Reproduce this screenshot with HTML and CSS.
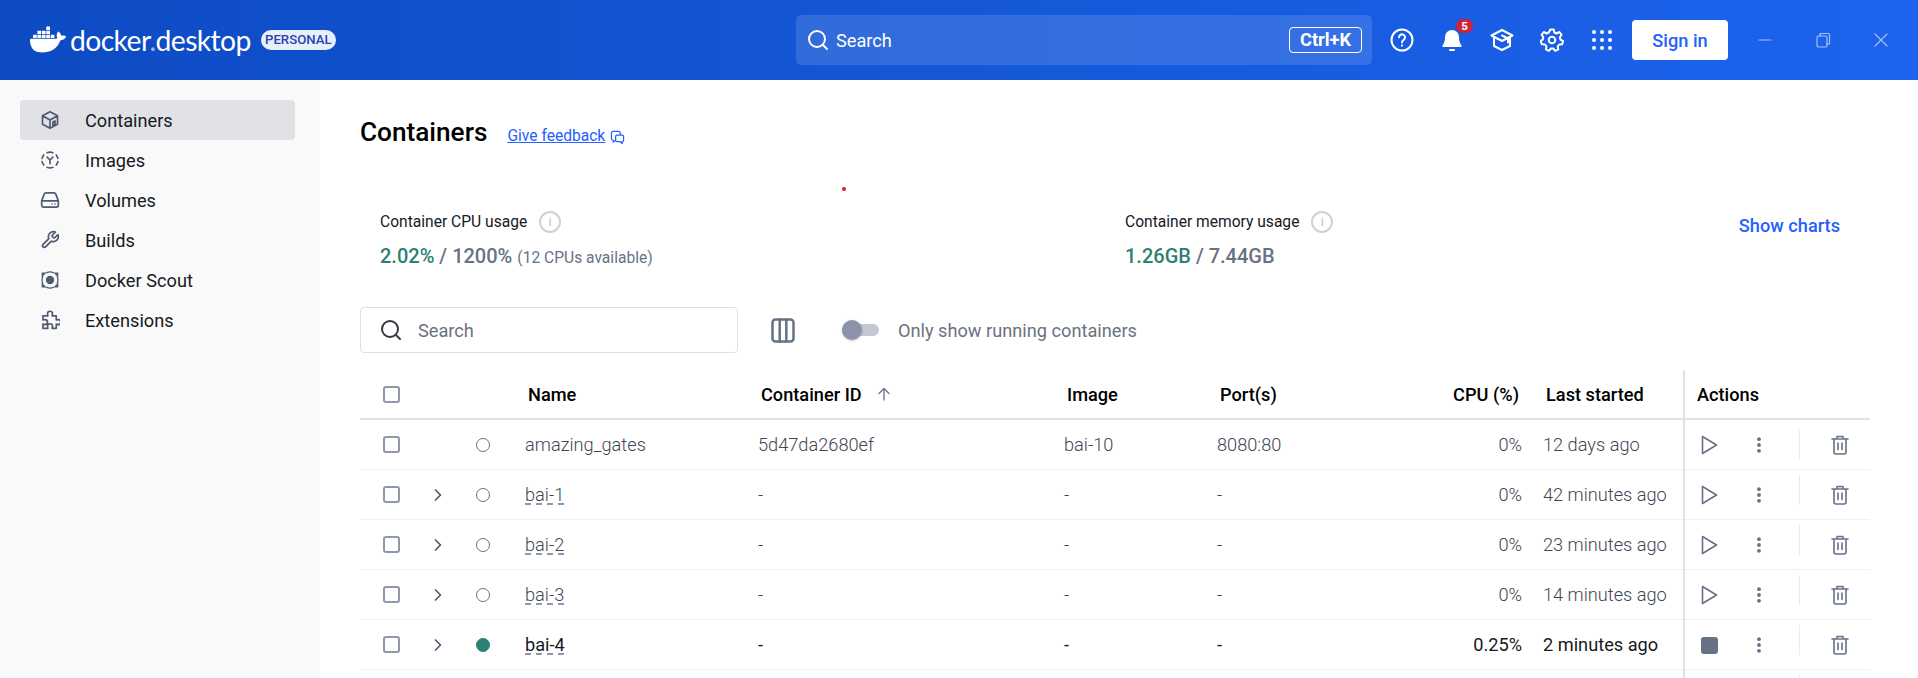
FILE: index.html
```html
<!DOCTYPE html>
<html lang="en">
<head>
    <meta charset="UTF-8">
    <title>Docker Desktop</title>
    <link rel="stylesheet" href="styles.css">
</head>
<body>
    <svg class="sprites" xmlns="http://www.w3.org/2000/svg">
        <symbol id="i-search" viewBox="0 0 24 24"><circle cx="11" cy="11" r="8"/><path d="M17 17l4 4"/></symbol>
        <symbol id="i-play" viewBox="0 0 24 24"><path d="M5.5 3.5l14 8.500-14 8.500z"/></symbol>
        <symbol id="i-more" viewBox="0 0 24 24"><circle class="solid" cx="12" cy="6.200" r="1.900"/><circle class="solid" cx="12" cy="12" r="1.900"/><circle class="solid" cx="12" cy="17.800" r="1.900"/></symbol>
        <symbol id="i-trash" viewBox="0 0 24 24"><path d="M4 6h16M9 6V3.500h6V6M6 6v13a2 2 0 002 2h8a2 2 0 002-2V6M10 10v6.500M14 10v6.500"/></symbol>
        <symbol id="i-chevron" viewBox="0 0 24 24"><path d="M9 6l6 6-6 6"/></symbol>
    </svg>

    <header class="topbar">
        <div class="brand">
            <svg class="whale" viewBox="0 0 24 19"><path transform="translate(0 -3)" d="M13.983 11.078h2.119a.186.186 0 00.186-.185V9.006a.186.186 0 00-.186-.186h-2.119a.185.185 0 00-.185.185v1.888c0 .102.083.185.185.185m-2.954-5.43h2.118a.186.186 0 00.186-.186V3.574a.186.186 0 00-.186-.185h-2.118a.185.185 0 00-.185.185v1.888c0 .102.082.185.185.186m0 2.716h2.118a.187.187 0 00.186-.186V6.29a.186.186 0 00-.186-.185h-2.118a.185.185 0 00-.185.185v1.887c0 .102.082.185.185.186m-2.93 0h2.12a.186.186 0 00.184-.186V6.29a.185.185 0 00-.185-.185H8.1a.185.185 0 00-.185.185v1.887c0 .102.083.185.185.186m-2.964 0h2.119a.186.186 0 00.185-.186V6.29a.185.185 0 00-.185-.185H5.136a.186.186 0 00-.186.185v1.887c0 .102.084.185.186.186m5.893 2.715h2.118a.186.186 0 00.186-.185V9.006a.186.186 0 00-.186-.186h-2.118a.185.185 0 00-.185.185v1.888c0 .102.082.185.185.185m-2.93 0h2.12a.185.185 0 00.184-.185V9.006a.185.185 0 00-.184-.186h-2.12a.185.185 0 00-.184.185v1.888c0 .102.083.185.185.185m-2.964 0h2.119a.185.185 0 00.185-.185V9.006a.185.185 0 00-.184-.186h-2.12a.186.186 0 00-.186.186v1.887c0 .102.084.185.186.185m-2.92 0h2.12a.185.185 0 00.184-.185V9.006a.185.185 0 00-.184-.186h-2.12a.185.185 0 00-.185.185v1.888c0 .102.083.185.185.185M23.763 9.89c-.065-.051-.672-.51-1.954-.51-.338.001-.676.03-1.01.087-.248-1.7-1.653-2.53-1.716-2.566l-.344-.199-.226.327c-.284.438-.49.922-.612 1.43-.23.97-.09 1.882.403 2.661-.595.332-1.55.413-1.744.42H.751a.751.751 0 00-.75.748 11.376 11.376 0 00.692 4.062c.545 1.428 1.355 2.48 2.41 3.124 1.18.723 3.1 1.137 5.275 1.137.983.003 1.963-.086 2.93-.266a12.248 12.248 0 003.823-1.389c.98-.567 1.86-1.288 2.61-2.136 1.252-1.418 1.998-2.997 2.553-4.4h.221c1.372 0 2.215-.549 2.68-1.009.309-.293.55-.65.707-1.046l.098-.288Z"/></svg>
            <span class="wordmark">docker<span class="wordmark-dot">.</span>desktop</span>
            <span class="plan">PERSONAL</span>
        </div>

        <div class="global-search">
            <svg class="icon"><use href="#i-search"/></svg>
            <span class="global-search-text">Search</span>
            <kbd class="shortcut">Ctrl+K</kbd>
        </div>

        <div class="top-icons">
            <span class="top-icon">
                <svg viewBox="0 0 24 24"><circle cx="12" cy="12" r="10.500"/><path d="M9 9.300a3 3 0 115 2.300c-1.200.9-2 1.400-2 2.900"/><circle class="solid" cx="12" cy="17.600" r="1.100"/></svg>
            </span>
            <span class="top-icon">
                <svg viewBox="0 0 24 24"><path class="solid" d="M12 2a7 7 0 00-7 7c0 4-.8 6.300-2.500 8.500-.5.700 0 1.500.8 1.500h17.400c.8 0 1.300-.8.800-1.500C19.800 15.300 19 13 19 9a7 7 0 00-7-7z"/><rect class="solid" x="9" y="21" width="6" height="2" rx="1"/></svg>
                <span class="badge">5</span>
            </span>
            <span class="top-icon">
                <svg viewBox="0 0 24 24"><path d="M4 9v9l8 4 8-4V9M1.500 7.500L12 2l10.500 5.500L12 13zM12 7.500l6 3v4"/></svg>
            </span>
            <span class="top-icon">
                <svg viewBox="0 0 24 24"><circle cx="12" cy="12" r="3.300"/><path d="M10.300 1.500h3.400l.7 3 2.200 1 2.800-1.500 2.200 2.800-1.700 2.500.5 2.300 2.600 1.400-.8 3.300-3 .2-1.500 1.900.6 3-3 1.400-2-2.300h-2.400l-2 2.300-3-1.400.6-3-1.500-1.900-3-.2L.2 13l2.600-1.400.5-2.300L1.600 6.800l2.200-2.800 2.800 1.500 2.200-1z"/></svg>
            </span>
            <span class="top-icon">
                <svg viewBox="0 0 24 24"><g class="solid"><circle cx="4" cy="4" r="2"/><circle cx="12" cy="4" r="2"/><circle cx="20" cy="4" r="2"/><circle cx="4" cy="12" r="2"/><circle cx="12" cy="12" r="2"/><circle cx="20" cy="12" r="2"/><circle cx="4" cy="20" r="2"/><circle cx="12" cy="20" r="2"/><circle cx="20" cy="20" r="2"/></g></svg>
            </span>
        </div>

        <button class="sign-in">Sign in</button>

        <div class="window-controls">
            <span class="win-btn"><svg viewBox="0 0 16 16"><path d="M2 8h12"/></svg></span>
            <span class="win-btn"><svg viewBox="0 0 16 16"><rect x="2" y="4" width="10" height="11" rx="1.500"/><path d="M5 4V1.500h8.500a1 1 0 011 1V12H12"/></svg></span>
            <span class="win-btn"><svg viewBox="0 0 16 16"><path d="M2 2l12 12M14 2L2 14"/></svg></span>
        </div>
    </header>

    <div class="app">
        <nav class="sidebar">
            <a class="nav-item active">
                <svg viewBox="0 0 24 24"><path d="M12 2l9 5v10l-9 5-9-5V7zM3 7l9 5 9-5M12 12v10M15.500 14.500v4l2.500-1.400v-4z"/></svg>
                Containers
            </a>
            <a class="nav-item">
                <svg viewBox="0 0 24 24"><path d="M8.500 3.200A9.500 9.500 0 0115.500 3.200M19.500 6a9.500 9.500 0 011.900 4M21.500 14a9.500 9.500 0 01-2 4M15.500 20.800a9.500 9.500 0 01-7 0M4.500 18a9.500 9.500 0 01-2-4M2.600 10a9.500 9.500 0 011.900-4M8.500 8.500L12 12l3.500-3.500M12 12v4.500"/></svg>
                Images
            </a>
            <a class="nav-item">
                <svg viewBox="0 0 24 24"><path d="M2 13l3-8a2.500 2.500 0 012.300-1.500h9.400A2.500 2.500 0 0119 5l3 8v5a2.500 2.500 0 01-2.500 2.500h-15A2.500 2.500 0 012 18zM2 13h20"/><circle class="solid" cx="14.500" cy="16.800" r="1"/><circle class="solid" cx="18" cy="16.800" r="1"/></svg>
                Volumes
            </a>
            <a class="nav-item">
                <svg viewBox="0 0 24 24"><path d="M14.700 6.300a1 1 0 000 1.400l1.600 1.600a1 1 0 001.400 0l3.800-3.800a6 6 0 01-7.900 7.900l-6.900 6.900a2.100 2.100 0 01-3-3l6.900-6.900a6 6 0 017.900-7.900z"/></svg>
                Builds
            </a>
            <a class="nav-item">
                <svg viewBox="0 0 24 24"><circle class="solid" cx="12" cy="12" r="5"/><path class="thin" d="M8 3.200a10 10 0 018 0M20.800 8a10 10 0 010 8M16 20.800a10 10 0 01-8 0M3.200 16a10 10 0 010-8"/><path class="solid" d="M2 3h6l-6 6zM22 3v6l-6-6zM2 21v-6l6 6zM22 21h-6l6-6z"/></svg>
                Docker Scout
            </a>
            <a class="nav-item">
                <svg viewBox="0 0 24 24"><path d="M9 4.500a3 3 0 016 0c0 1-.5 1.500-.5 2.500h5v5c1 0 1.500-.5 2.500-.5a3 3 0 010 6c-1 0-1.500-.5-2.500-.5V22h-5c0-1 .5-1.500.5-2.500a3 3 0 00-6 0c0 1 .5 1.500.5 2.500h-6v-5c1 0 1.500.5 2.500.5a3 3 0 000-6c-1 0-1.500.5-2.500.5V7h6c0-1-.5-1.500-.5-2.500z"/></svg>
                Extensions
            </a>
        </nav>

        <main class="content">
            <div class="page-title">
                <h1>Containers</h1>
                <a class="feedback">Give feedback</a>
                <svg class="feedback-icon" viewBox="0 0 16 16"><path d="M11 5.500V3.500A2 2 0 009 1.500H3.500a2 2 0 00-2 2V9a2 2 0 002 2v2l2-2M7.500 5.500h5.500a1.500 1.500 0 011.500 1.500v4a1.500 1.500 0 01-1.500 1.500v2l-2-2H7.500A1.500 1.500 0 016 11V7a1.500 1.500 0 011.500-1.500z"/></svg>
            </div>

            <div class="stats">
                <div class="stat stat-cpu">
                    <div class="stat-label">Container CPU usage <span class="info">i</span></div>
                    <div class="stat-value"><span class="used">2.02%</span> / 1200% <small>(12 CPUs available)</small></div>
                </div>
                <div class="stat stat-mem">
                    <div class="stat-label">Container memory usage <span class="info">i</span></div>
                    <div class="stat-value"><span class="used">1.26GB</span> / 7.44GB</div>
                </div>
                <a class="show-charts">Show charts</a>
            </div>

            <div class="toolbar">
                <div class="search-box">
                    <svg class="icon"><use href="#i-search"/></svg>
                    <span>Search</span>
                </div>
                <svg class="columns-icon" viewBox="0 0 24 25"><rect x="1.500" y="1.500" width="21" height="22" rx="3"/><path d="M8.700 1.500v22M15.300 1.500v22"/></svg>
                <span class="toggle"><span class="toggle-thumb"></span></span>
                <span class="toggle-label">Only show running containers</span>
            </div>

            <div class="table">
                <div class="row head">
                    <div class="cell c-check"><span class="checkbox"></span></div>
                    <div class="cell c-expand"></div>
                    <div class="cell c-status"></div>
                    <div class="cell c-name">Name</div>
                    <div class="cell c-id">Container ID <svg class="sort" viewBox="0 0 16 16"><path d="M8 14V2.500M3 7.500l5-5 5 5"/></svg></div>
                    <div class="cell c-image">Image</div>
                    <div class="cell c-ports">Port(s)</div>
                    <div class="cell c-cpu">CPU (%)</div>
                    <div class="cell c-started">Last started</div>
                    <div class="cell c-actions">Actions</div>
                </div>

                <div class="row">
                    <div class="cell c-check"><span class="checkbox"></span></div>
                    <div class="cell c-expand"></div>
                    <div class="cell c-status"><span class="dot"></span></div>
                    <div class="cell c-name">amazing_gates</div>
                    <div class="cell c-id">5d47da2680ef</div>
                    <div class="cell c-image">bai-10</div>
                    <div class="cell c-ports">8080:80</div>
                    <div class="cell c-cpu">0%</div>
                    <div class="cell c-started">12 days ago</div>
                    <div class="cell c-actions">
                        <span class="act"><svg class="icon"><use href="#i-play"/></svg></span>
                        <span class="act"><svg class="icon"><use href="#i-more"/></svg></span>
                        <span class="act-divider first"></span>
                        <span class="act"><svg class="icon"><use href="#i-trash"/></svg></span>
                    </div>
                </div>

                <div class="row">
                    <div class="cell c-check"><span class="checkbox"></span></div>
                    <div class="cell c-expand"><svg class="icon"><use href="#i-chevron"/></svg></div>
                    <div class="cell c-status"><span class="dot"></span></div>
                    <div class="cell c-name"><span class="stack-name">bai-1</span></div>
                    <div class="cell c-id">-</div>
                    <div class="cell c-image">-</div>
                    <div class="cell c-ports">-</div>
                    <div class="cell c-cpu">0%</div>
                    <div class="cell c-started">42 minutes ago</div>
                    <div class="cell c-actions">
                        <span class="act"><svg class="icon"><use href="#i-play"/></svg></span>
                        <span class="act"><svg class="icon"><use href="#i-more"/></svg></span>
                        <span class="act-divider"></span>
                        <span class="act"><svg class="icon"><use href="#i-trash"/></svg></span>
                    </div>
                </div>

                <div class="row">
                    <div class="cell c-check"><span class="checkbox"></span></div>
                    <div class="cell c-expand"><svg class="icon"><use href="#i-chevron"/></svg></div>
                    <div class="cell c-status"><span class="dot"></span></div>
                    <div class="cell c-name"><span class="stack-name">bai-2</span></div>
                    <div class="cell c-id">-</div>
                    <div class="cell c-image">-</div>
                    <div class="cell c-ports">-</div>
                    <div class="cell c-cpu">0%</div>
                    <div class="cell c-started">23 minutes ago</div>
                    <div class="cell c-actions">
                        <span class="act"><svg class="icon"><use href="#i-play"/></svg></span>
                        <span class="act"><svg class="icon"><use href="#i-more"/></svg></span>
                        <span class="act-divider"></span>
                        <span class="act"><svg class="icon"><use href="#i-trash"/></svg></span>
                    </div>
                </div>

                <div class="row">
                    <div class="cell c-check"><span class="checkbox"></span></div>
                    <div class="cell c-expand"><svg class="icon"><use href="#i-chevron"/></svg></div>
                    <div class="cell c-status"><span class="dot"></span></div>
                    <div class="cell c-name"><span class="stack-name">bai-3</span></div>
                    <div class="cell c-id">-</div>
                    <div class="cell c-image">-</div>
                    <div class="cell c-ports">-</div>
                    <div class="cell c-cpu">0%</div>
                    <div class="cell c-started">14 minutes ago</div>
                    <div class="cell c-actions">
                        <span class="act"><svg class="icon"><use href="#i-play"/></svg></span>
                        <span class="act"><svg class="icon"><use href="#i-more"/></svg></span>
                        <span class="act-divider"></span>
                        <span class="act"><svg class="icon"><use href="#i-trash"/></svg></span>
                    </div>
                </div>

                <div class="row running">
                    <div class="cell c-check"><span class="checkbox"></span></div>
                    <div class="cell c-expand"><svg class="icon"><use href="#i-chevron"/></svg></div>
                    <div class="cell c-status"><span class="dot"></span></div>
                    <div class="cell c-name"><span class="stack-name">bai-4</span></div>
                    <div class="cell c-id">-</div>
                    <div class="cell c-image">-</div>
                    <div class="cell c-ports">-</div>
                    <div class="cell c-cpu">0.25%</div>
                    <div class="cell c-started">2 minutes ago</div>
                    <div class="cell c-actions">
                        <span class="act"><span class="stop"></span></span>
                        <span class="act"><svg class="icon"><use href="#i-more"/></svg></span>
                        <span class="act-divider"></span>
                        <span class="act"><svg class="icon"><use href="#i-trash"/></svg></span>
                    </div>
                </div>

                <div class="row row-cut">
                    <div class="cell c-actions c-last"><span class="act-divider"></span></div>
                </div>
            </div>
        </main>
    </div>

    <span class="cursor-dot"></span>
</body>
</html>
```

FILE: styles.css
```css
* {
    box-sizing: border-box;
}
html, body {
    height: 100%;
}
body {
    margin: 0;
    overflow: hidden;
    font-family: Roboto, "Liberation Sans", sans-serif;
    font-size: 18.2px;
    color: #17191e;
    background: #fff;
}
svg {
    fill: none;
    stroke: currentColor;
    stroke-width: 2;
    stroke-linecap: round;
    stroke-linejoin: round;
}
.solid {
    fill: currentColor;
    stroke: none;
}
.sprites {
    display: none;
}
.icon {
    width: 24px;
    height: 24px;
    display: block;
}

/* top bar */
.topbar {
    height: 80px;
    display: flex;
    align-items: center;
    color: #fff;
    background: linear-gradient(90deg, #0d4bc3 0%, #1d63ed 100%);
}
.brand {
    width: 796px;
    padding-left: 30px;
    display: flex;
    align-items: center;
}
.whale {
    width: 36px;
    height: 28.5px;
    fill: #fff;
    stroke: none;
    flex: none;
}
.wordmark {
    margin-left: 4px;
    font-family: Lato, sans-serif;
    font-size: 28.3px;
    letter-spacing: -0.6px;
    line-height: 36px;
}
.wordmark-dot {
    color: #9db8e8;
}
.plan {
    margin-left: 10px;
    width: 75px;
    height: 20px;
    border-radius: 10px;
    background: #e5f0fb;
    color: #2b3fb3;
    font-size: 13.2px;
    font-weight: 500;
    line-height: 20px;
    text-align: center;
}
.global-search {
    width: 576px;
    height: 50px;
    padding: 0 10px;
    display: flex;
    align-items: center;
    background: rgba(255, 255, 255, 0.13);
    border-radius: 5px;
}
.global-search-text {
    margin-left: 6px;
    flex: 1;
}
.shortcut {
    width: 73px;
    height: 26px;
    border: 1px solid #fff;
    border-radius: 4px;
    font-family: Roboto, sans-serif;
    font-size: 18.2px;
    font-weight: 700;
    line-height: 24px;
    text-align: center;
}
.top-icons {
    margin-left: 5px;
    display: flex;
}
.top-icon {
    position: relative;
    width: 50px;
    height: 40px;
    display: flex;
    align-items: center;
    justify-content: center;
}
.top-icon svg {
    width: 24px;
    height: 24px;
}
.badge {
    position: absolute;
    top: -1px;
    left: 29px;
    width: 17px;
    height: 14px;
    border-radius: 7px;
    background: #d1203a;
    color: #fff;
    font-size: 11.5px;
    font-weight: 700;
    line-height: 14px;
    text-align: center;
}
.sign-in {
    margin-left: 5px;
    width: 96px;
    height: 40px;
    border: none;
    border-radius: 4px;
    background: #fff;
    color: #2560ff;
    font-family: Roboto, sans-serif;
    font-size: 18.2px;
    font-weight: 500;
}
.window-controls {
    margin-left: 8px;
    display: flex;
    color: rgba(255, 255, 255, 0.6);
}
.win-btn {
    width: 58px;
    height: 40px;
    display: flex;
    align-items: center;
    justify-content: center;
}
.win-btn svg {
    width: 16px;
    height: 16px;
    stroke-width: 1.2;
}

/* sidebar */
.app {
    display: flex;
    height: calc(100% - 80px);
}
.sidebar {
    width: 320px;
    flex: none;
    padding: 20px 25px 0 20px;
    background: #f9f9fa;
}
.nav-item {
    height: 40px;
    padding-left: 20px;
    display: flex;
    align-items: center;
    gap: 25px;
    border-radius: 4px;
}
.nav-item.active {
    background: #e1e2e6;
}
.nav-item svg {
    width: 20px;
    height: 20px;
    color: #505a6e;
    flex: none;
}
.nav-item svg .thin {
    stroke-width: 1.5;
}

/* page */
.content {
    flex: 1;
    padding: 0 48px 0 40px;
    min-width: 0;
    overflow: hidden;
}
.page-title {
    height: 44px;
    margin-top: 30px;
    display: flex;
    align-items: center;
}
.page-title h1 {
    margin: 0;
    font-size: 26.2px;
    font-weight: 500;
    color: #000;
}
.feedback {
    margin-left: 20px;
    margin-top: 8px;
    font-size: 15.6px;
    color: #2560ff;
    text-decoration: underline;
}
.feedback-icon {
    width: 15px;
    height: 15px;
    margin-left: 5px;
    margin-top: 10px;
    color: #2560ff;
    stroke-width: 1.3;
}
.stats {
    height: 76px;
    margin-top: 56px;
    padding-left: 20px;
    display: flex;
}
.stat-cpu {
    width: 745px;
}
.stat-mem {
    flex: 1;
}
.stat-label {
    height: 24px;
    display: flex;
    align-items: center;
    gap: 12px;
    font-size: 15.6px;
}
.info {
    width: 22px;
    height: 22px;
    border: 2px solid #d0d1d4;
    border-radius: 50%;
    color: #c0c1c5;
    font-size: 13px;
    line-height: 18px;
    text-align: center;
}
.stat-value {
    margin-top: 10px;
    font-size: 20px;
    font-weight: 500;
    color: #677285;
}
.stat-value small {
    font-size: 15.6px;
    font-weight: 400;
}
.used {
    color: #2e7f74;
}
.show-charts {
    margin: 5px 30px 0 0;
    font-weight: 500;
    color: #2560ff;
}
.toolbar {
    height: 46px;
    margin-top: 21px;
    display: flex;
    align-items: center;
}
.search-box {
    width: 378px;
    height: 46px;
    padding-left: 18px;
    display: flex;
    align-items: center;
    gap: 15px;
    border: 1px solid #dfe0e4;
    border-radius: 4px;
    color: #6b7280;
}
.search-box .icon {
    color: #333944;
}
.columns-icon {
    width: 24px;
    height: 25px;
    margin-left: 33px;
    color: #677285;
    stroke-width: 2.5;
}
.toggle {
    position: relative;
    width: 37px;
    height: 12px;
    margin-left: 47px;
    border-radius: 6px;
    background: #c4c8d2;
}
.toggle-thumb {
    position: absolute;
    top: -4px;
    left: 0;
    width: 20px;
    height: 20px;
    border-radius: 50%;
    background: #8b93a8;
    box-shadow: 0 1px 3px rgba(0, 0, 0, 0.2);
}
.toggle-label {
    margin-left: 19px;
    color: #6b7280;
}

/* table */
.table {
    margin-top: 17px;
    width: 1510px;
}
.row {
    height: 50px;
    display: grid;
    grid-template-columns: 62px 32px 58px 233px 306px 153px 156px 170px 153px 187px;
    border-bottom: 1px solid #f1f1f3;
    font-weight: 300;
    color: #3e4553;
}
.row.head {
    border-bottom: 2px solid #e1e2e6;
    font-weight: 500;
    color: #000;
}
.row.running {
    font-weight: 400;
    color: #17191e;
}
.row.row-cut {
    height: 9px;
    border-bottom: none;
    overflow: hidden;
}
.cell {
    display: flex;
    align-items: center;
    min-width: 0;
}
.c-check, .c-expand, .c-status {
    justify-content: center;
}
.c-name, .c-id, .c-image, .c-ports, .c-started {
    padding-left: 13px;
}
.head .c-name, .head .c-id, .head .c-image, .head .c-ports, .head .c-started {
    padding-left: 16px;
}
.c-cpu {
    justify-content: flex-end;
    padding-right: 8px;
}
.head .c-cpu {
    padding-right: 11px;
}
.c-actions {
    grid-column: 10;
    border-left: 2px solid #e1e2e6;
    margin-bottom: -1px;
}
.head .c-actions {
    padding: 0 0 2px 12px;
    margin-bottom: -2px;
}
.c-last {
    align-items: flex-start;
    padding-left: 114px;
    margin-bottom: 0;
}
.checkbox {
    width: 17px;
    height: 17px;
    border: 2px solid #8f97ac;
    border-radius: 3px;
    background: #fff;
}
.c-expand .icon {
    width: 20px;
    height: 20px;
    color: #505a6e;
}
.dot {
    width: 14px;
    height: 14px;
    border: 1.5px solid #677285;
    border-radius: 50%;
}
.running .dot {
    background: #2e7f74;
    border-color: #2e7f74;
}
.stack-name {
    text-decoration: underline dashed #8f97ac;
    text-underline-offset: 3px;
}
.sort {
    width: 16px;
    height: 16px;
    margin-left: 14px;
    color: #677285;
    stroke-width: 1.3;
}
.act {
    width: 50px;
    height: 50px;
    display: flex;
    align-items: center;
    justify-content: center;
    color: #677285;
    flex: none;
}
.act:first-child {
    margin-left: -1px;
}
.act .icon {
    stroke-width: 1.6;
}
.stop {
    width: 17px;
    height: 17px;
    border-radius: 3px;
    background: #677285;
}
.act-divider {
    width: 1px;
    height: 30px;
    margin: -10px 15px 0;
    background: #eaebed;
    flex: none;
}
.act-divider.first {
    margin: 0 15px;
}
.c-last .act-divider {
    margin: 5px 0 0 0;
}
.cursor-dot {
    position: absolute;
    left: 842px;
    top: 187px;
    width: 4px;
    height: 4px;
    border-radius: 50%;
    background: #e3122a;
}
```
